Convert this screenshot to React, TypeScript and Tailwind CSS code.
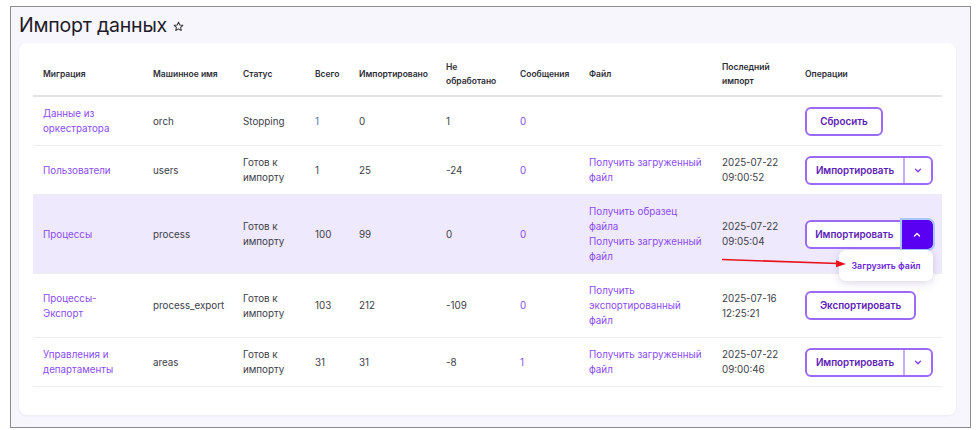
import React from "react";

const F = { fontFamily: "Inter, 'Noto Sans', sans-serif" };

const cols = [110, 90, 72, 44, 87, 74, 69, 133, 83, 147];

function Link({ children }: { children: React.ReactNode }) {
  return <span className="text-[#8a4cf6]">{children}</span>;
}

function Chevron({ up, white }: { up?: boolean; white?: boolean }) {
  return (
    <svg width="8" height="5" viewBox="0 0 8 5" fill="none">
      <path
        d={up ? "M1.5 4 L4 1.5 L6.5 4" : "M1.5 1.2 L4 3.7 L6.5 1.2"}
        stroke={white ? "#ffffff" : "#7c3aed"}
        strokeWidth="1.3"
        strokeLinecap="round"
        strokeLinejoin="round"
      />
    </svg>
  );
}

function SplitButton({ open }: { open?: boolean }) {
  return (
    <div className="relative inline-flex">
      <div className="flex h-[29px] w-[128px] rounded-[6px] border-2 border-[#9b6bf8] bg-white overflow-visible">
        <div className="flex w-[96px] items-center justify-center text-[9.8px] font-semibold text-[#5b21b6]">
          Импортировать
        </div>
        {open ? (
          <div className="-my-[2px] -mr-[2px] flex w-[32px] items-center justify-center rounded-r-[5px] bg-[#5a00f2] outline-2 outline-[#a9c8ff]">
            <Chevron up white />
          </div>
        ) : (
          <div className="flex flex-1 items-center justify-center border-l-2 border-[#c7aefb]">
            <Chevron />
          </div>
        )}
      </div>
      {open && (
        <div className="absolute left-[34px] top-[30px] z-10 flex h-[31px] w-[94px] items-center justify-center rounded-[7px] bg-white text-[8.8px] font-semibold text-[#6d28d9] shadow-[0_2px_8px_rgba(60,40,120,0.18)]">
          Загрузить файл
        </div>
      )}
    </div>
  );
}

function OutlineButton({ children, w }: { children: React.ReactNode; w: string }) {
  return (
    <div className={`flex h-[29px] ${w} items-center justify-center rounded-[6px] border-2 border-[#9b6bf8] bg-white text-[9.8px] font-semibold text-[#5b21b6]`}>
      {children}
    </div>
  );
}

type Row = {
  cells: React.ReactNode[];
  hl?: boolean;
};

const rows: Row[] = [
  {
    cells: [
      <Link>Данные из<br />оркестратора</Link>,
      "orch",
      "Stopping",
      <span className="text-[#4f72b8]">1</span>,
      "0",
      "1",
      <Link>0</Link>,
      "",
      "",
      <OutlineButton w="w-[78px]">Сбросить</OutlineButton>,
    ],
  },
  {
    cells: [
      <Link>Пользователи</Link>,
      "users",
      <>Готов к<br />импорту</>,
      "1",
      "25",
      "-24",
      <Link>0</Link>,
      <Link>Получить загруженный<br />файл</Link>,
      <>2025-07-22<br />09:00:52</>,
      <SplitButton />,
    ],
  },
  {
    hl: true,
    cells: [
      <Link>Процессы</Link>,
      "process",
      <>Готов к<br />импорту</>,
      "100",
      "99",
      "0",
      <Link>0</Link>,
      <Link>Получить образец<br />файла<br />Получить загруженный<br />файл</Link>,
      <>2025-07-22<br />09:05:04</>,
      <SplitButton open />,
    ],
  },
  {
    cells: [
      <Link>Процессы-<br />Экспорт</Link>,
      "process_export",
      <>Готов к<br />импорту</>,
      "103",
      "212",
      "-109",
      <Link>0</Link>,
      <Link>Получить<br />экспортированный<br />файл</Link>,
      <>2025-07-16<br />12:25:21</>,
      <OutlineButton w="w-[111px]">Экспортировать</OutlineButton>,
    ],
  },
  {
    cells: [
      <Link>Управления и<br />департаменты</Link>,
      "areas",
      <>Готов к<br />импорту</>,
      "31",
      "31",
      "-8",
      <Link>1</Link>,
      <Link>Получить загруженный<br />файл</Link>,
      <>2025-07-22<br />09:00:46</>,
      <SplitButton />,
    ],
  },
];

const headers: React.ReactNode[] = [
  "Миграция",
  "Машинное имя",
  "Статус",
  "Всего",
  "Импортировано",
  <>Не<br />обработано</>,
  "Сообщения",
  "Файл",
  <>Последний<br />импорт</>,
  "Операции",
];

export default function App() {
  return (
    <div className="relative h-[430px] w-[979px] overflow-hidden bg-white" style={F}>
      <div className="ml-[10px] mt-[6px] h-[422px] w-[961px] border border-[#8c8c8c] bg-[#f8f6fd] pl-[8px] pr-[14px]">
        <div className="flex h-[36px] items-center gap-[6px] pt-[1px]">
          <h1 className="text-[19.5px] font-normal tracking-[-0.2px] text-[#1d1b26]">Импорт данных</h1>
          <svg width="11" height="11" viewBox="0 0 24 24" fill="none" stroke="#333" strokeWidth="2.2" strokeLinejoin="round" className="mt-[1px]">
            <path d="M12 2.5l2.9 6.1 6.6.8-4.9 4.6 1.3 6.6L12 17.3l-5.9 3.3 1.3-6.6-4.9-4.6 6.6-.8z" />
          </svg>
        </div>
        <div className="h-[372px] rounded-[8px] bg-white px-[14px] pt-[10px] shadow-[0_1px_3px_rgba(80,60,140,0.08)]">
          <table className="w-[909px] table-fixed border-collapse text-[9.8px] leading-[15px] text-[#3d3d47]">
            <colgroup>
              {cols.map((w, i) => (
                <col key={i} style={{ width: w }} />
              ))}
            </colgroup>
            <thead>
              <tr className="border-b-2 border-[#e2e2e6]">
                {headers.map((h, i) => (
                  <th key={i} className="h-[43px] pl-[10px] pr-[4px] text-left align-middle text-[8.5px] font-semibold leading-[14px] text-[#2d2d35]">
                    {h}
                  </th>
                ))}
              </tr>
            </thead>
            <tbody>
              {rows.map((r, ri) => (
                <tr key={ri} className={`border-b border-[#eeeef1] ${r.hl ? "bg-[#efe9fd]" : ""}`}>
                  {r.cells.map((c, ci) => (
                    <td key={ci} className="py-[9px] pl-[10px] pr-[2px] align-middle whitespace-nowrap">
                      {c}
                    </td>
                  ))}
                </tr>
              ))}
            </tbody>
          </table>
        </div>
      </div>
      <svg className="absolute left-0 top-0 z-20" width="979" height="430" viewBox="0 0 979 430" pointerEvents="none">
        <line x1="722" y1="259.5" x2="838" y2="263.5" stroke="#e8141c" strokeWidth="1.6" />
        <path d="M846 264 L836 260.3 L836 267.3 Z" fill="#e8141c" />
      </svg>
    </div>
  );
}
